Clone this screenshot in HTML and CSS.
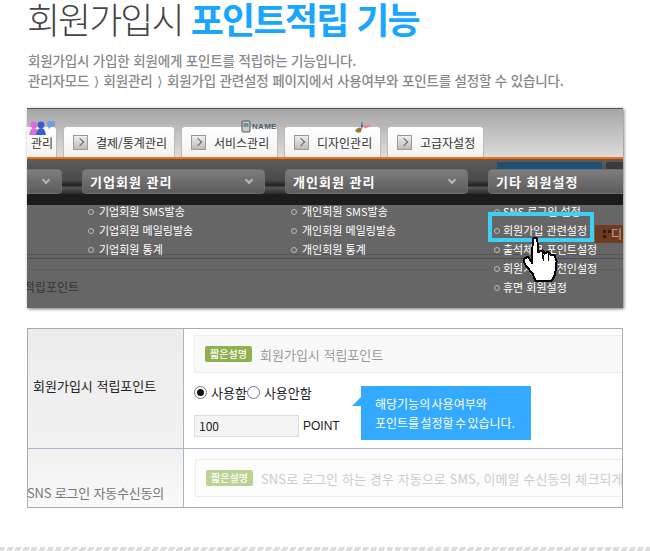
FILE: index.html
```html
<!DOCTYPE html>
<html lang="ko">
<head>
<meta charset="utf-8">
<title>회원가입시 포인트적립 기능</title>
<link rel="stylesheet" href="styles.css">
</head>
<body>
<main class="page">
  <h1 class="title">회원가입시 <strong>포인트적립 기능</strong></h1>
  <p class="intro">회원가입시 가입한 회원에게 포인트를 적립하는 기능입니다.<br>관리자모드 <span class="sep">⟩</span> 회원관리 <span class="sep">⟩</span> 회원가입 관련설정 페이지에서 사용여부와 포인트를 설정할 수 있습니다.</p>

  <section class="shot">
    <div class="tabs">
      <div class="tab tab-cut"><span>관리</span>
        <svg class="ico ico-people" viewBox="0 0 26 14"><circle cx="5" cy="4" r="3.4" fill="#d86ee0"/><path d="M0 14 Q1 7 5 7 Q9 7 10 14Z" fill="#d86ee0"/><circle cx="12" cy="4" r="3.4" fill="#3a5fc8"/><path d="M7 14 Q8 7 12 7 Q16 7 17 14Z" fill="#3a5fc8"/><rect x="18" y="0" width="8" height="6" rx="2" fill="#6f9fe0"/><path d="M19 6 l1 2 l2-2z" fill="#6f9fe0"/></svg>
      </div>
      <div class="tab tab-pay"><i class="arrow"></i><span>결제/통계관리</span></div>
      <div class="tab tab-svc"><i class="arrow"></i><span>서비스관리</span>
        <svg class="ico ico-phone" viewBox="0 0 10 13"><rect x="1" y="1" width="8" height="11" rx="1" fill="#c4ccd2" stroke="#555"/><rect x="2.5" y="3" width="5" height="4" fill="#6c93a8"/></svg>
        <b class="name-tag">NAME</b>
      </div>
      <div class="tab tab-des"><i class="arrow"></i><span>디자인관리</span>
        <svg class="ico ico-brush" viewBox="0 0 17 13"><path d="M9 6 Q13 2 17 4 Q14 8 10 7Z" fill="#e88a88"/><path d="M8 0 L9 6 L7 7Z" fill="#2a4a90"/><path d="M1 10 Q4 5 8 7 L7 11 Q4 13 1 10Z" fill="#9a7a3a"/></svg>
      </div>
      <div class="tab tab-adm"><i class="arrow"></i><span>고급자설정</span></div>
    </div>
    <div class="menu-bar">
      <i class="peek peek-blue"></i><i class="peek peek-gray"></i>
      <div class="menu-btn"><i class="chev"></i></div>
      <div class="menu-btn"><span>기업회원 관리</span><i class="chev"></i></div>
      <div class="menu-btn"><span>개인회원 관리</span><i class="chev"></i></div>
      <div class="menu-btn"><span>기타 회원설정</span></div>
    </div>
    <div class="band"></div>
    <div class="lists">
      <ul class="list">
        <li>기업회원 SMS발송</li>
        <li>기업회원 메일링발송</li>
        <li>기업회원 통계</li>
      </ul>
      <ul class="list">
        <li>개인회원 SMS발송</li>
        <li>개인회원 메일링발송</li>
        <li>개인회원 통계</li>
      </ul>
      <ul class="list list-last">
        <li>SNS 로그인 설정</li>
        <li>회원가입 관련설정</li>
        <li>출석체크 포인트설정</li>
        <li>회원가입 추천인설정</li>
        <li>휴면 회원설정</li>
      </ul>
      <p class="behind">적립포인트</p>
      <div class="chip"><i class="chip-dots"></i>디</div>
      <div class="highlight"></div>
      <svg class="hand" viewBox="0 0 120 145">
        <path d="M38 12 Q45 4 52 12 L54 52 L68 46 L74 56 L84 50 L92 60 L104 62 L110 80 L106 118 L96 138 L46 138 L38 118 L14 88 L10 72 L24 66 L36 84 Z" fill="#fff" stroke="#000" stroke-width="6" stroke-linejoin="round"/>
        <path d="M68 52 L70 78 M86 58 L86 78" fill="none" stroke="#000" stroke-width="4"/>
      </svg>
    </div>
  </section>

  <section class="form">
    <div class="row row-one">
      <div class="label label-one">회원가입시 적립포인트</div>
      <div class="cell">
        <div class="desc"><span class="badge">짧은설명</span><span class="desc-text">회원가입시 적립포인트</span></div>
        <div class="radios">
          <span class="radio radio-on"></span><span class="radio-text">사용함</span><span class="radio"></span><span class="radio-text">사용안함</span>
        </div>
        <div class="point"><span class="input">100</span><span class="unit">POINT</span></div>
        <div class="note">해당기능의 사용여부와<br>포인트를 설정할 수 있습니다.</div>
      </div>
    </div>
    <div class="row row-two">
      <div class="label label-two">SNS 로그인 자동수신동의</div>
      <div class="cell cell-two">
        <div class="desc desc-two"><span class="badge">짧은설명</span><span class="desc-text">SNS로 로그인 하는 경우 자동으로 SMS, 이메일 수신동의 체크되게</span></div>
      </div>
    </div>
  </section>
</main>
<div class="hatch"></div>
</body>
</html>
```
FILE: styles.css
```css
* { box-sizing: border-box; }
html, body { margin: 0; padding: 0; }
body {
  width: 650px;
  height: 551px;
  overflow: hidden;
  background: #fff;
  font-family: "Noto Sans CJK KR", "Noto Sans", sans-serif;
  color: #222;
  display: flex;
  flex-direction: column;
}
.page { flex: 1; padding: 0 27px; }

.title {
  margin: 0;
  height: 42px;
  font-size: 36px;
  line-height: 37px;
  font-weight: 300;
  letter-spacing: -2px;
  color: #444;
  white-space: nowrap;
}
.title strong { font-weight: 700; color: #1aa5ff; letter-spacing: -1.7px; }

.intro {
  margin: 8px 0 0;
  height: 40px;
  padding-left: 1px;
  font-size: 13.5px;
  line-height: 20px;
  font-weight: 500;
  color: #888;
  letter-spacing: -0.17px;
  white-space: nowrap;
}
.sep { margin: 0 1px; font-family: "DejaVu Sans", sans-serif; line-height: 1; }

.shot {
  margin-top: 18px;
  width: 596px;
  height: 200px;
  border-top: 1px solid #555;
  overflow: hidden;
  position: relative;
  box-shadow: 1px 1px 3px #777;
  display: flex;
  flex-direction: column;
  background: #666;
}

.tabs {
  flex: none;
  display: flex;
  align-items: flex-end;
  gap: 6px;
  background: linear-gradient(#a6a6a6, #dcdcdc);
  border-bottom: 2px solid #ff6d00;
  height: 50px;
  margin-left: -20px;
}
.tab {
  position: relative;
  height: 31px;
  background: linear-gradient(#fff, #f2f2f2);
  border: 1px solid #bbb;
  border-bottom: 0;
  border-radius: 4px 4px 0 0;
  display: flex;
  align-items: center;
  padding-left: 9px;
  gap: 8px;
  font-size: 12px;
  color: #333;
  white-space: nowrap;
}
.tab-cut { width: 50px; justify-content: flex-end; padding: 0 3px 0 0; }
.tab-pay { width: 112px; }
.tab-svc { width: 97px; }
.tab-des { width: 97px; }
.tab-adm { width: 97px; }
.arrow {
  width: 15px;
  height: 15px;
  flex: none;
  background: linear-gradient(#eee, #bbb);
  border: 1px solid #999;
  position: relative;
}
.arrow::after {
  content: "";
  position: absolute;
  left: 3px;
  top: 3px;
  width: 5px;
  height: 5px;
  border-top: 1px solid #666;
  border-right: 1px solid #666;
  transform: rotate(45deg);
}
.ico { position: absolute; }
.ico-people { left: 21px; top: -6px; width: 26px; height: 14px; }
.ico-phone { left: 59px; top: -7px; width: 10px; height: 13px; }
.ico-brush { left: 69px; top: -6px; width: 17px; height: 13px; }
.name-tag {
  position: absolute;
  left: 70px;
  top: -4px;
  font-size: 8px;
  line-height: 8px;
  font-weight: 700;
  letter-spacing: 0.3px;
  color: #4a5a6a;
  font-family: "Liberation Sans", sans-serif;
}

.menu-bar {
  flex: none;
  position: relative;
  height: 35px;
  padding-top: 10px;
  display: flex;
  gap: 20px;
  margin-left: -148px;
  background: linear-gradient(#5c5c5c 0, #4a4a4a 60%, #222 75%, #555 82%, #2a2a2a 100%);
}
.menu-btn {
  flex: none;
  width: 183px;
  height: 25px;
  border-radius: 4px;
  border: 1px solid #6e6e6e;
  background: linear-gradient(#7d7d7d, #5c5c5c);
  color: #fff;
  font-size: 13px;
  line-height: 23px;
  font-weight: 700;
  letter-spacing: 1px;
  padding-left: 7px;
  position: relative;
  white-space: nowrap;
}
.chev {
  position: absolute;
  right: 12px;
  top: 7px;
  width: 6px;
  height: 6px;
  border-right: 2px solid #b4b4b4;
  border-bottom: 2px solid #b4b4b4;
  transform: rotate(45deg);
}
.peek { position: absolute; top: 3px; height: 7px; border-radius: 2px 2px 0 0; }
.peek-blue { left: 618px; width: 105px; background: #1f4f73; }
.peek-gray { left: 727px; width: 30px; background: #3a3a3a; }

.band { flex: none; height: 11px; background: #1c1c1c; }

.lists {
  flex: 1;
  position: relative;
  display: flex;
  gap: 20px;
  padding-left: 55px;
  background:
    linear-gradient(#555, #555) 0 49px / 100% 1px no-repeat,
    linear-gradient(#4a4f60, #4a4f60) 0 53px / 100% 1px no-repeat,
    linear-gradient(#5e5e5e, #5e5e5e) 0 64px / 100% 1px no-repeat,
    #666;
}
.list {
  flex: none;
  width: 183px;
  margin: 0;
  padding: 0 0 0 17px;
  list-style: none;
  display: flex;
  flex-direction: column;
  gap: 7px;
  position: relative;
  font-size: 11px;
  line-height: 12px;
  color: #fff;
  white-space: nowrap;
}
.list-last { padding-left: 15px; }
.list li { position: relative; }
.list li::before {
  content: "";
  position: absolute;
  left: -11px;
  top: 4px;
  width: 4px;
  height: 4px;
  border-radius: 50%;
  border: 1px solid #bbb;
}
.list-last li::before { left: -9px; }
.behind {
  position: absolute;
  left: 0;
  top: 75px;
  margin: 0;
  width: 52px;
  overflow: hidden;
  direction: rtl;
  font-size: 12px;
  line-height: 14px;
  color: #333;
  white-space: nowrap;
}
.chip {
  position: absolute;
  left: 568px;
  top: 20px;
  width: 28px;
  height: 18px;
  background: #6c3b22;
  color: #c9a58f;
  font-size: 12px;
  line-height: 18px;
  text-align: right;
  padding-right: 1px;
}
.chip-dots {
  position: absolute;
  left: 8px;
  top: 5px;
  width: 8px;
  height: 8px;
  background:
    linear-gradient(#2c1a10, #2c1a10) 0 0 / 3px 3px no-repeat,
    linear-gradient(#2c1a10, #2c1a10) 100% 0 / 3px 3px no-repeat,
    linear-gradient(#2c1a10, #2c1a10) 0 100% / 3px 3px no-repeat;
}
.highlight {
  position: absolute;
  left: 461px;
  top: 7px;
  width: 106px;
  height: 30px;
  border: 4px solid #3dd0f5;
}
.hand {
  position: absolute;
  left: 493px;
  top: 30px;
  width: 40px;
  height: 48px;
  shape-rendering: crispEdges;
}

.form {
  margin-top: 20px;
  width: 596px;
  height: 180px;
  border: 1px solid #aaa;
  overflow: hidden;
}
.row { display: flex; }
.row-one { height: 120px; border-bottom: 1px solid #a8b8c8; }
.row-two { height: 58px; }
.label {
  flex: none;
  width: 156px;
  border-right: 1px solid #a8b4c4;
  background: linear-gradient(#ececec, #f2f2f2);
  display: flex;
  align-items: center;
  font-size: 13px;
  color: #222;
  white-space: nowrap;
}
.label-one { padding: 0 0 6px 5px; }
.label-two {
  align-items: flex-end;
  padding: 0 0 5px 0;
  text-indent: -1px;
  letter-spacing: -0.2px;
  background: linear-gradient(#f0f0f0, #fafafa);
  color: #777;
}
.cell { flex: 1; position: relative; padding: 6px 0 0 10px; min-width: 0; }
.cell-two { padding: 10px 0 0 11px; }
.desc {
  height: 38px;
  background: #f9f9f9;
  border: 1px solid #eee;
  border-right: 0;
  display: flex;
  align-items: center;
  gap: 8px;
  padding-left: 10px;
  white-space: nowrap;
  overflow: hidden;
  font-size: 13px;
  color: #999;
}
.desc-two { color: #ccc; background: #fdfdfd; letter-spacing: 0.1px; }
.badge {
  flex: none;
  width: 47px;
  height: 16px;
  border-radius: 2px;
  background: #8fb04e;
  color: #fff;
  font-size: 10px;
  line-height: 16px;
  text-align: center;
  font-weight: 500;
}
.desc-two .badge { background: #bcd294; }
.radios {
  display: flex;
  align-items: center;
  margin-top: 11px;
  height: 16px;
  font-size: 13px;
  color: #222;
}
.radio {
  flex: none;
  width: 13px;
  height: 13px;
  border-radius: 50%;
  border: 1px solid #777;
  background: #fff;
  position: relative;
}
.radio-on::after {
  content: "";
  position: absolute;
  left: 2px;
  top: 2px;
  width: 7px;
  height: 7px;
  border-radius: 50%;
  background: #111;
}
.radio-text { margin-left: 4px; }
.point { display: flex; align-items: center; gap: 4px; margin-top: 15px; font-size: 12px; color: #222; }
.input {
  width: 105px;
  height: 22px;
  background: #f4f4f4;
  border: 1px solid #ddd;
  line-height: 20px;
  padding-left: 4px;
  font-size: 12px;
}
.unit { font-family: "Liberation Sans", sans-serif; }
.note {
  position: absolute;
  left: 177px;
  top: 57px;
  width: 170px;
  height: 54px;
  background: #33aaff;
  color: #fff;
  font-size: 12px;
  line-height: 19px;
  word-spacing: -2px;
  padding: 8px 0 0 14px;
  white-space: nowrap;
}
.note::before {
  content: "";
  position: absolute;
  left: -9px;
  top: 11px;
  border-style: solid;
  border-width: 0 0 9px 9px;
  border-color: transparent transparent #33aaff transparent;
}

.hatch {
  flex: none;
  height: 4px;
  background: repeating-linear-gradient(120deg, #ddd 0 5px, #fff 5px 7px);
}
```
